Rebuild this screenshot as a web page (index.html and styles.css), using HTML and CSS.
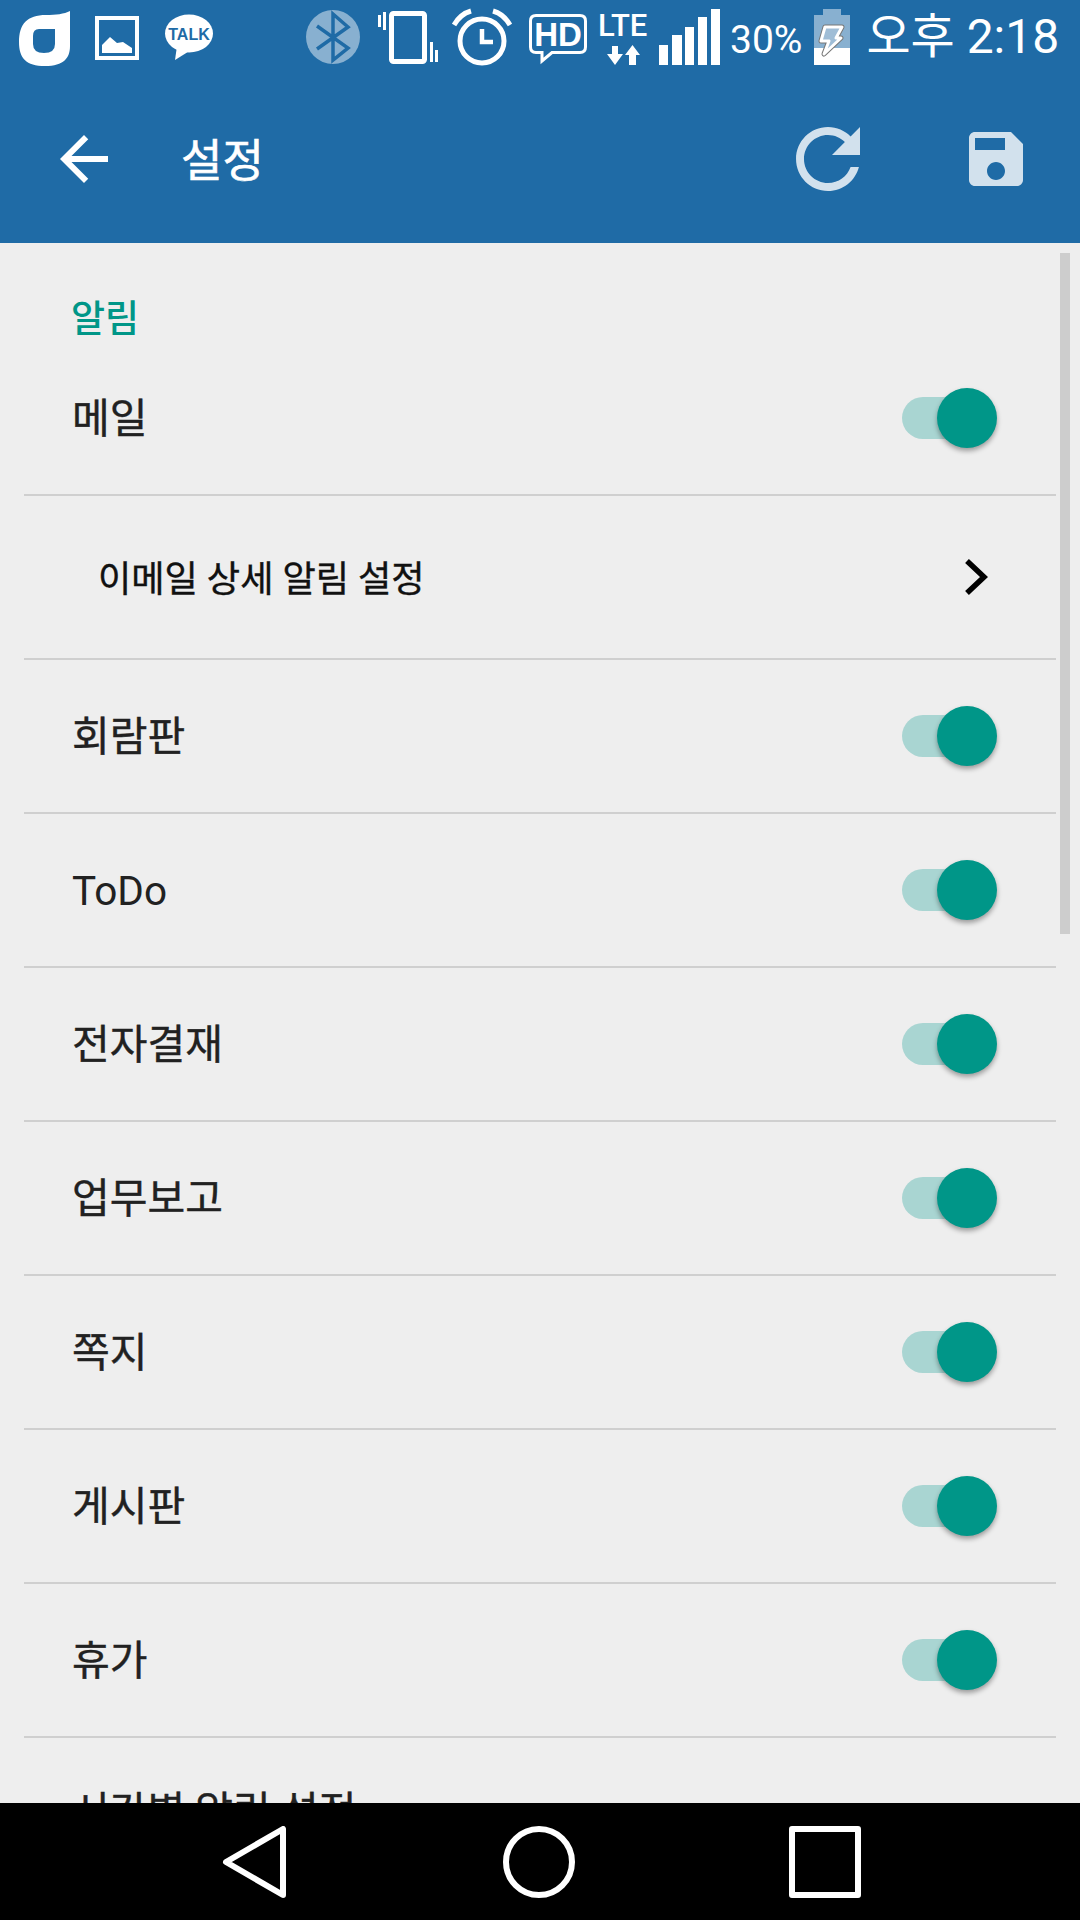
FILE: index.html
```html
<!DOCTYPE html>
<html lang="ko">
<head>
  <meta charset="UTF-8">
  <title>설정</title>
  <link rel="stylesheet" href="styles.css">
</head>
<body>
  <header class="header">
    <div class="status-bar">
      <svg class="logo" width="51" height="70" viewBox="19 0 51 70"><path fill="#fff" fill-rule="evenodd" d="M70 11V46C70 58 64 66 45 66C26 66 19 58 19 42C19 24 27 15 46 15C56 15 64 14 70 11ZM39 29Q33 29 33 36V44Q33 53 44 53Q55 53 55 44V29Z"/></svg>
      <svg class="pic" width="44" height="70" viewBox="0 0 44 70"><rect x="2" y="18" width="40" height="40" fill="none" stroke="#fff" stroke-width="4"/><path fill="#fff" d="M7 53V45L15 37L22 43L28 42L37 48V53Z"/></svg>
      <svg class="talk" width="48" height="70" viewBox="0 0 48 70"><ellipse cx="24" cy="33.5" rx="24" ry="19" fill="#fff"/><path fill="#fff" d="M12 46L10 60L26 50Z"/><text class="talk-text" x="24" y="40" text-anchor="middle">TALK</text></svg>
      <svg class="bt" width="54" height="70" viewBox="0 0 54 70"><circle cx="27" cy="37" r="27" fill="#fff" fill-opacity=".47"/><path fill="none" stroke="#1f6ba6" stroke-width="3.5" d="M11 26L42 48L27 60V14L42 27L11 49"/></svg>
      <svg class="vib" width="60" height="70" viewBox="0 0 60 70"><rect x="13.500" y="13.500" width="33" height="48" rx="2" fill="none" stroke="#fff" stroke-width="5"/><path fill="#fff" d="M0 15h3v12H0zM5 12h3v18H5zM52 42h3v20h-3zM57 50h3v12h-3z"/></svg>
      <svg class="alarm" width="60" height="70" viewBox="0 0 60 70"><g fill="none" stroke="#fff"><circle cx="30" cy="41" r="22" stroke-width="5"/><path stroke-width="4.500" d="M30 29V42H41"/><path stroke-width="5" d="M2 25C6 18 12 13 19 11M41 11C48 13 54 18 58 25"/></g></svg>
      <svg class="hd" width="58" height="70" viewBox="0 0 58 70"><path fill="none" stroke="#fff" stroke-width="3" d="M7 15.500H51Q56.500 15.500 56.500 21V47Q56.500 52.500 51 52.500H23L13 61V52.500H7Q1.500 52.500 1.500 47V21Q1.500 15.500 7 15.500Z"/><text class="hd-text" x="29" y="46" text-anchor="middle">HD</text></svg>
      <svg class="lte" width="49" height="70" viewBox="0 0 49 70"><text class="lte-text" x="-1" y="36">LTE</text><path fill="#fff" d="M13 46H19V54H24L16 65L8 54H13ZM33.500 45L41 55H37V65H30V55H26Z"/></svg>
      <svg class="signal" width="61" height="70" viewBox="0 0 61 70"><path fill="#fff" d="M0 45h9v20H0zM13 35h10v30H13zM26 27h9v38h-9zM39 17h9v48h-9zM52 9h9v56h-9z"/></svg>
      <span class="battery-text">30%</span>
      <svg class="battery" width="36" height="70" viewBox="0 0 36 70">
        <path fill="#fff" fill-opacity=".47" d="M9 9H27V15H36V48H0V15H9Z"/>
        <path fill="#fff" d="M0 48H36V65H0Z"/>
        <path fill="none" stroke="#777" stroke-width="5" stroke-linejoin="round" d="M11 27H28L22 38H27L10 54L15 41H7Z"/>
        <path fill="#9fbdd6" stroke="#fff" stroke-width="3" stroke-linejoin="round" d="M11 27H28L22 38H27L10 54L15 41H7Z"/>
      </svg>
      <span class="clock">오후 2:18</span>
    </div>
    <div class="toolbar">
      <svg class="toolbar-icon" width="72" height="72" viewBox="0 0 24 24"><path fill="#fff" d="M20 11H7.830l5.590-5.590L12 4l-8 8 8 8 1.410-1.410L7.830 13H20v-2z"/></svg>
      <h1 class="title">설정</h1>
      <svg class="reload" width="96" height="96" viewBox="0 0 24 24"><path d="M17.650 6.350C16.200 4.900 14.210 4 12 4c-4.420 0-7.990 3.580-7.990 8s3.570 8 7.990 8c3.730 0 6.840-2.550 7.730-6h-2.080c-.82 2.330-3.040 4-5.650 4-3.310 0-6-2.690-6-6s2.690-6 6-6c1.660 0 3.140.69 4.220 1.780L13 11h7V4l-2.350 2.350z"/></svg>
      <svg class="save" width="72" height="72" viewBox="0 0 24 24"><path d="M17 3H5c-1.110 0-2 .9-2 2v14c0 1.100.89 2 2 2h14c1.100 0 2-.9 2-2V7l-4-4zm-5 16c-1.660 0-3-1.340-3-3s1.340-3 3-3 3 1.340 3 3-1.340 3-3 3zm3-10H5V5h10v4z"/></svg>
    </div>
  </header>

  <main class="content">
    <div class="scrollbar"></div>
    <h2 class="section-title">알림</h2>
    <ul class="list">
      <li class="row row-first"><span class="label">메일</span><span class="switch"><span class="knob"></span></span></li>
      <li class="row row-sub">
        <span class="label">이메일 상세 알림 설정</span>
        <svg width="24" height="36" viewBox="0 0 24 36"><path fill="none" stroke="#000" stroke-width="5.500" d="M3 2L20 18L3 34"/></svg>
      </li>
      <li class="row"><span class="label">회람판</span><span class="switch"><span class="knob"></span></span></li>
      <li class="row"><span class="label-latin">ToDo</span><span class="switch"><span class="knob"></span></span></li>
      <li class="row"><span class="label">전자결재</span><span class="switch"><span class="knob"></span></span></li>
      <li class="row"><span class="label">업무보고</span><span class="switch"><span class="knob"></span></span></li>
      <li class="row"><span class="label">쪽지</span><span class="switch"><span class="knob"></span></span></li>
      <li class="row"><span class="label">게시판</span><span class="switch"><span class="knob"></span></span></li>
      <li class="row"><span class="label">휴가</span><span class="switch"><span class="knob"></span></span></li>
      <li class="row-last">시간별 알림 설정</li>
    </ul>
  </main>

  <nav class="nav">
    <svg width="64" height="72" viewBox="0 0 64 72"><path fill="none" stroke="#fff" stroke-width="6" stroke-linejoin="round" d="M61 3V69L4 36Z"/></svg>
    <svg width="72" height="72" viewBox="0 0 72 72"><circle cx="36" cy="36" r="33" fill="none" stroke="#fff" stroke-width="6"/></svg>
    <svg class="nav-recent" width="72" height="72" viewBox="0 0 72 72"><rect x="3" y="3" width="66" height="66" fill="none" stroke="#fff" stroke-width="6" stroke-linejoin="round"/></svg>
  </nav>
</body>
</html>
```

FILE: styles.css
```css
* {
  box-sizing: border-box;
}

body {
  margin: 0;
  width: 1080px;
  height: 1920px;
  overflow: hidden;
  display: flex;
  flex-direction: column;
  background: #eeeeee;
  font-family: Roboto, "Noto Sans CJK KR", sans-serif;
}

svg {
  display: block;
  flex: none;
}

/* header */
.header {
  height: 243px;
  flex: none;
  background: #1f6ba6;
  color: white;
}

.status-bar {
  height: 75px;
  display: flex;
  align-items: flex-start;
  padding-left: 19px;
}

.pic { margin-left: 25px; }
.talk { margin-left: 26px; }
.bt { margin-left: 93px; }
.vib { margin-left: 18px; }
.alarm { margin-left: 14px; }
.hd { margin-left: 17px; }
.lte { margin-left: 12px; }
.signal { margin-left: 11px; }
.battery { margin-left: 12px; }

.talk-text {
  font: 700 16px "Liberation Sans", sans-serif;
  fill: #1f6ba6;
}

.hd-text {
  font: 700 33px "Liberation Sans", sans-serif;
  fill: white;
}

.lte-text {
  font: 500 31px Roboto, sans-serif;
  fill: white;
}

.battery-text {
  margin-left: 10px;
  font-size: 39px;
  line-height: 40px;
  margin-top: 20px;
}

.clock {
  margin-left: 16px;
  font-size: 48px;
  line-height: 50px;
  margin-top: 12px;
  white-space: nowrap;
}

.toolbar {
  height: 168px;
  display: flex;
  align-items: center;
  padding: 0 48px;
}

.title {
  margin: 0 0 0 61px;
  padding-bottom: 4px;
  font-size: 45px;
  font-weight: 400;
  -webkit-text-stroke: 0.6px white;
  flex: 1;
}

.reload, .save {
  fill: rgba(255, 255, 255, 0.8);
}

.save {
  margin-left: 84px;
}

/* list */
.content {
  position: relative;
  height: 1560px;
  flex: none;
  overflow: hidden;
}

.scrollbar {
  position: absolute;
  top: 10px;
  right: 10px;
  width: 10px;
  height: 681px;
  background: #cdcdcd;
}

.section-title {
  margin: 0;
  padding: 52px 0 0 71px;
  font-size: 37px;
  line-height: 50px;
  font-weight: 500;
  color: #009688;
}

.list {
  list-style: none;
  margin: -2px 24px 0;
  padding: 0;
}

.row {
  height: 154px;
  display: flex;
  align-items: center;
  justify-content: space-between;
  padding: 0 59px 0 48px;
  border-bottom: 2px solid #cfcfcf;
  font-size: 41px;
  color: #212121;
  -webkit-text-stroke: 0.4px #212121;
}

.label {
  padding-bottom: 6px;
}

.label-latin {
  padding-top: 2px;
  font-size: 40.5px;
  -webkit-text-stroke: 0;
}

.row-first {
  height: 153px;
  padding-bottom: 2px;
}

.row-sub {
  height: 164px;
  padding: 0 68px 0 74px;
  font-size: 36.2px;
  color: #111;
  -webkit-text-stroke: 0.4px #111;
}

.row-sub .label {
  padding-bottom: 2px;
}

.row-last {
  padding: 44px 0 0 48px;
  font-size: 41px;
  line-height: 60px;
  color: #212121;
  -webkit-text-stroke: 0.4px #212121;
}

/* switch */
.switch {
  position: relative;
  width: 95px;
  height: 60px;
  display: flex;
  align-items: center;
}

.switch::before {
  content: "";
  width: 84px;
  height: 42px;
  border-radius: 21px;
  background: #a9d5d2;
}

.knob {
  position: absolute;
  top: 0;
  right: 0;
  width: 60px;
  height: 60px;
  border-radius: 50%;
  background: #009688;
  box-shadow: 0 3px 5px rgba(0, 0, 0, 0.35);
}

/* bottom navigation */
.nav {
  height: 117px;
  flex: none;
  background: black;
  display: flex;
  align-items: center;
  padding-left: 222px;
  gap: 217px;
}

.nav-recent {
  margin-left: -3px;
}
```
